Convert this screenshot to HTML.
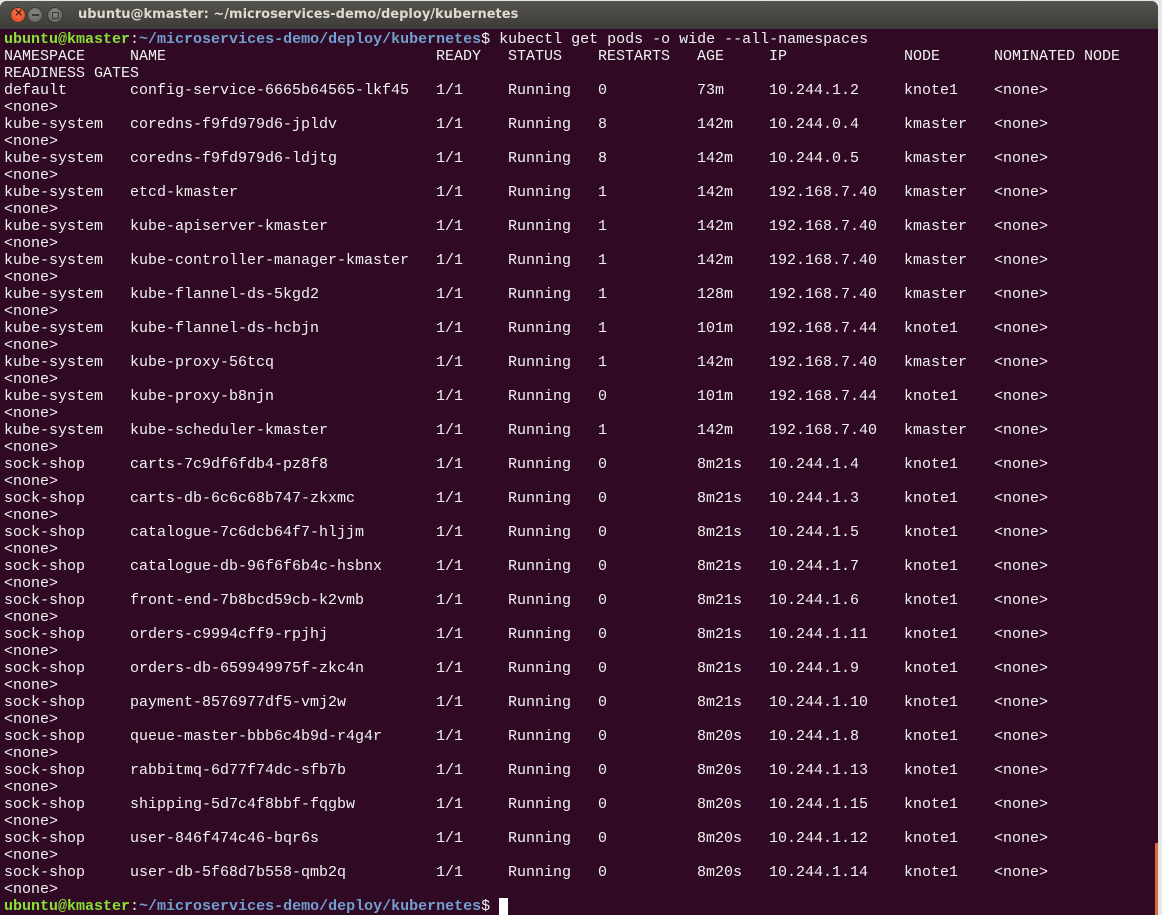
<!DOCTYPE html>
<html><head><meta charset="utf-8"><style>
html,body{margin:0;padding:0;width:1162px;height:915px;overflow:hidden;background:#e6e6e6}
#win{position:absolute;left:0;top:1px;width:1158px;height:914px;border-radius:7px 7px 0 0;overflow:hidden;background:#300a24}
#title{height:28px;background:linear-gradient(#56544e,#3c3b37);position:relative}
.b{position:absolute;top:6px;width:16px;height:16px;border-radius:50%;box-sizing:border-box}
#t{position:absolute;left:78px;top:6px;font:bold 13px "DejaVu Sans","Liberation Sans",sans-serif;color:#dfdbd2}
#term{position:absolute;left:4px;top:30px;font:15px/17px "Liberation Mono",monospace;color:#f2f2f2;white-space:nowrap}
.l{height:17px;white-space:pre}
.l span{display:inline-block}
.a{width:126px}.n{width:306px}.r{width:72px}.s{width:90px}.x{width:99px}.g{width:72px}.i{width:135px}.d{width:90px}
.gr{color:#8ae234;font-weight:bold}.bl{color:#729fcf;font-weight:bold}
</style></head><body>
<div id="win">
<div id="title">
<div class="b" style="left:10px;background:radial-gradient(circle at 50% 35%,#f7794a,#d9431a);border:1px solid #3a3a35"><span style="position:absolute;left:3px;top:-2px;font:bold 11px 'DejaVu Sans',sans-serif;color:#3c1a10">×</span></div>
<div class="b" style="left:27px;background:radial-gradient(circle at 50% 35%,#8a8983,#5f5e59);border:1px solid #3a3a35"><span style="position:absolute;left:4px;top:6px;width:7px;height:2px;background:#3a3935"></span></div>
<div class="b" style="left:47px;background:radial-gradient(circle at 50% 35%,#8a8983,#5f5e59);border:1px solid #3a3a35"><span style="position:absolute;left:4px;top:4px;width:5px;height:5px;border:1px solid #3a3935"></span></div>
<div id="t">ubuntu@kmaster: ~/microservices-demo/deploy/kubernetes</div>
</div>
<div style="position:absolute;left:1155px;top:842px;width:3px;height:73px;background:#dd6a3c"></div>
<div id="term"><div class="l"><span class="gr">ubuntu@kmaster</span>:<span class="bl">~/microservices-demo/deploy/kubernetes</span>$ kubectl get pods -o wide --all-namespaces</div><div class="l"><span class="a">NAMESPACE</span><span class="n">NAME</span><span class="r">READY</span><span class="s">STATUS</span><span class="x">RESTARTS</span><span class="g">AGE</span><span class="i">IP</span><span class="d">NODE</span>NOMINATED NODE</div><div class="l">READINESS GATES</div><div id="rows"></div><div class="l"><span class="gr">ubuntu@kmaster</span>:<span class="bl">~/microservices-demo/deploy/kubernetes</span>$ <span style="display:inline-block;width:9px;height:17px;background:#fff;vertical-align:top"></span></div></div>
</div>
<script>
var d=[
["default","config-service-6665b64565-lkf45","0","73m","10.244.1.2","knote1"],
["kube-system","coredns-f9fd979d6-jpldv","8","142m","10.244.0.4","kmaster"],
["kube-system","coredns-f9fd979d6-ldjtg","8","142m","10.244.0.5","kmaster"],
["kube-system","etcd-kmaster","1","142m","192.168.7.40","kmaster"],
["kube-system","kube-apiserver-kmaster","1","142m","192.168.7.40","kmaster"],
["kube-system","kube-controller-manager-kmaster","1","142m","192.168.7.40","kmaster"],
["kube-system","kube-flannel-ds-5kgd2","1","128m","192.168.7.40","kmaster"],
["kube-system","kube-flannel-ds-hcbjn","1","101m","192.168.7.44","knote1"],
["kube-system","kube-proxy-56tcq","1","142m","192.168.7.40","kmaster"],
["kube-system","kube-proxy-b8njn","0","101m","192.168.7.44","knote1"],
["kube-system","kube-scheduler-kmaster","1","142m","192.168.7.40","kmaster"],
["sock-shop","carts-7c9df6fdb4-pz8f8","0","8m21s","10.244.1.4","knote1"],
["sock-shop","carts-db-6c6c68b747-zkxmc","0","8m21s","10.244.1.3","knote1"],
["sock-shop","catalogue-7c6dcb64f7-hljjm","0","8m21s","10.244.1.5","knote1"],
["sock-shop","catalogue-db-96f6f6b4c-hsbnx","0","8m21s","10.244.1.7","knote1"],
["sock-shop","front-end-7b8bcd59cb-k2vmb","0","8m21s","10.244.1.6","knote1"],
["sock-shop","orders-c9994cff9-rpjhj","0","8m21s","10.244.1.11","knote1"],
["sock-shop","orders-db-659949975f-zkc4n","0","8m21s","10.244.1.9","knote1"],
["sock-shop","payment-8576977df5-vmj2w","0","8m21s","10.244.1.10","knote1"],
["sock-shop","queue-master-bbb6c4b9d-r4g4r","0","8m20s","10.244.1.8","knote1"],
["sock-shop","rabbitmq-6d77f74dc-sfb7b","0","8m20s","10.244.1.13","knote1"],
["sock-shop","shipping-5d7c4f8bbf-fqgbw","0","8m20s","10.244.1.15","knote1"],
["sock-shop","user-846f474c46-bqr6s","0","8m20s","10.244.1.12","knote1"],
["sock-shop","user-db-5f68d7b558-qmb2q","0","8m20s","10.244.1.14","knote1"]];
var h="";d.forEach(function(r){h+='<div class="l"><span class="a">'+r[0]+'</span><span class="n">'+r[1]+'</span><span class="r">1/1</span><span class="s">Running</span><span class="x">'+r[2]+'</span><span class="g">'+r[3]+'</span><span class="i">'+r[4]+'</span><span class="d">'+r[5]+'</span>&lt;none&gt;</div><div class="l">&lt;none&gt;</div>';});
document.getElementById("rows").innerHTML=h;
</script>
</body></html>
